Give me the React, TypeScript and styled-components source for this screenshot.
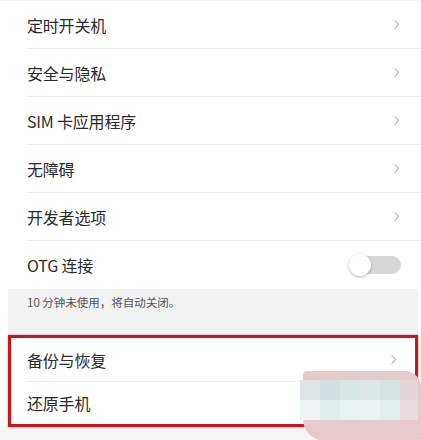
import React from 'react';
import styled, { createGlobalStyle } from 'styled-components';

const GlobalStyle = createGlobalStyle`
  body {
    margin: 0;
    background: #ffffff;
    font-family: "Noto Sans CJK SC", "Noto Sans", sans-serif;
    color: #2b2b2b;
  }
`;

const Page = styled.div`
  position: relative;
  width: 421px;
  height: 440px;
  overflow: hidden;
  background: #ffffff;
`;

const List = styled.div`
  border-top: 1px solid #f4f4f4;
`;

const Row = styled.div<{ $h?: number; $last?: boolean; $indent?: number }>`
  box-sizing: border-box;
  height: ${(p) => p.$h ?? 48}px;
  margin-left: ${(p) => p.$indent ?? 26}px;
  padding: 0 21px 0 1px;
  display: flex;
  align-items: center;
  justify-content: space-between;
  border-bottom: ${(p) => (p.$last ? 'none' : '1px solid #ededed')};
`;

const Label = styled.span`
  font-size: 16px;
  letter-spacing: -0.2px;
  color: #2b2b2b;
`;

const Footer = styled.div`
  box-sizing: border-box;
  height: 46px;
  margin: 0 3px 0 8px;
  padding: 5px 0 0 19px;
  background: #f2f2f2;
  font-size: 11.5px;
  line-height: 16px;
  color: #555;
`;

const Highlight = styled.div`
  box-sizing: border-box;
  margin: 0 3px 0 8px;
  height: 92px;
  border: 3px solid #c9161c;
  box-shadow: 0 0 2px rgba(201, 22, 28, 0.5);
`;

const Bottom = styled.div`
  height: 13px;
  background: #f5f5f5;
`;

const Track = styled.div`
  position: relative;
  width: 44px;
  height: 18px;
  margin-right: -1px;
  border-radius: 9px;
  background: #d7d7d7;
`;

const Knob = styled.div`
  position: absolute;
  left: -8px;
  top: -2px;
  width: 22px;
  height: 22px;
  border-radius: 50%;
  background: #ffffff;
  box-shadow: 0 1px 3px rgba(0, 0, 0, 0.28);
`;

const Blob = styled.div`
  position: absolute;
  left: 303px;
  top: 371px;
  width: 118px;
  height: 70px;
  background: #e6cbcc;
  border-radius: 4px 16px 4px 22px;
`;

const Mosaic = styled.div`
  position: absolute;
  left: 300px;
  top: 380px;
  display: grid;
  grid-template-columns: repeat(5, 20px) 18px;
  grid-template-rows: repeat(2, 20px);
`;

const Cell = styled.div<{ $c: string }>`
  background: ${(p) => p.$c};
`;

const Chevron = () => (
  <svg width="7" height="11" viewBox="0 0 7 11">
    <path d="M1.5 1 L5.5 5.5 L1.5 10" fill="none" stroke="#b3b3b3" strokeWidth="1.1" />
  </svg>
);

const Toggle = () => (
  <Track>
    <Knob />
  </Track>
);

const mosaicColors = [
  '#dde6e8', '#d2e0e3', '#d8e6e6', '#dfe8e8', '#d5e3e5', '#e6d5d6',
  '#eef4f4', '#e2eeee', '#e8f2f2', '#eaf3f2', '#e3eeee', '#e9dcdd',
];

const items = ['定时开关机', '安全与隐私', 'SIM 卡应用程序', '无障碍', '开发者选项'];

export default function App() {
  return (
    <Page>
      <GlobalStyle />
      <List>
        {items.map((t) => (
          <Row key={t}>
            <Label>{t}</Label>
            <Chevron />
          </Row>
        ))}
        <Row $last>
          <Label>OTG 连接</Label>
          <Toggle />
        </Row>
      </List>
      <Footer>10 分钟未使用，将自动关闭。</Footer>
      <Highlight>
        <Row $h={44} $indent={15} style={{ paddingRight: 18 }}>
          <Label>备份与恢复</Label>
          <Chevron />
        </Row>
        <Row $h={42} $indent={15} $last>
          <Label>还原手机</Label>
        </Row>
      </Highlight>
      <Bottom />
      <Blob />
      <Mosaic>
        {mosaicColors.map((c, i) => (
          <Cell key={i} $c={c} />
        ))}
      </Mosaic>
    </Page>
  );
}
